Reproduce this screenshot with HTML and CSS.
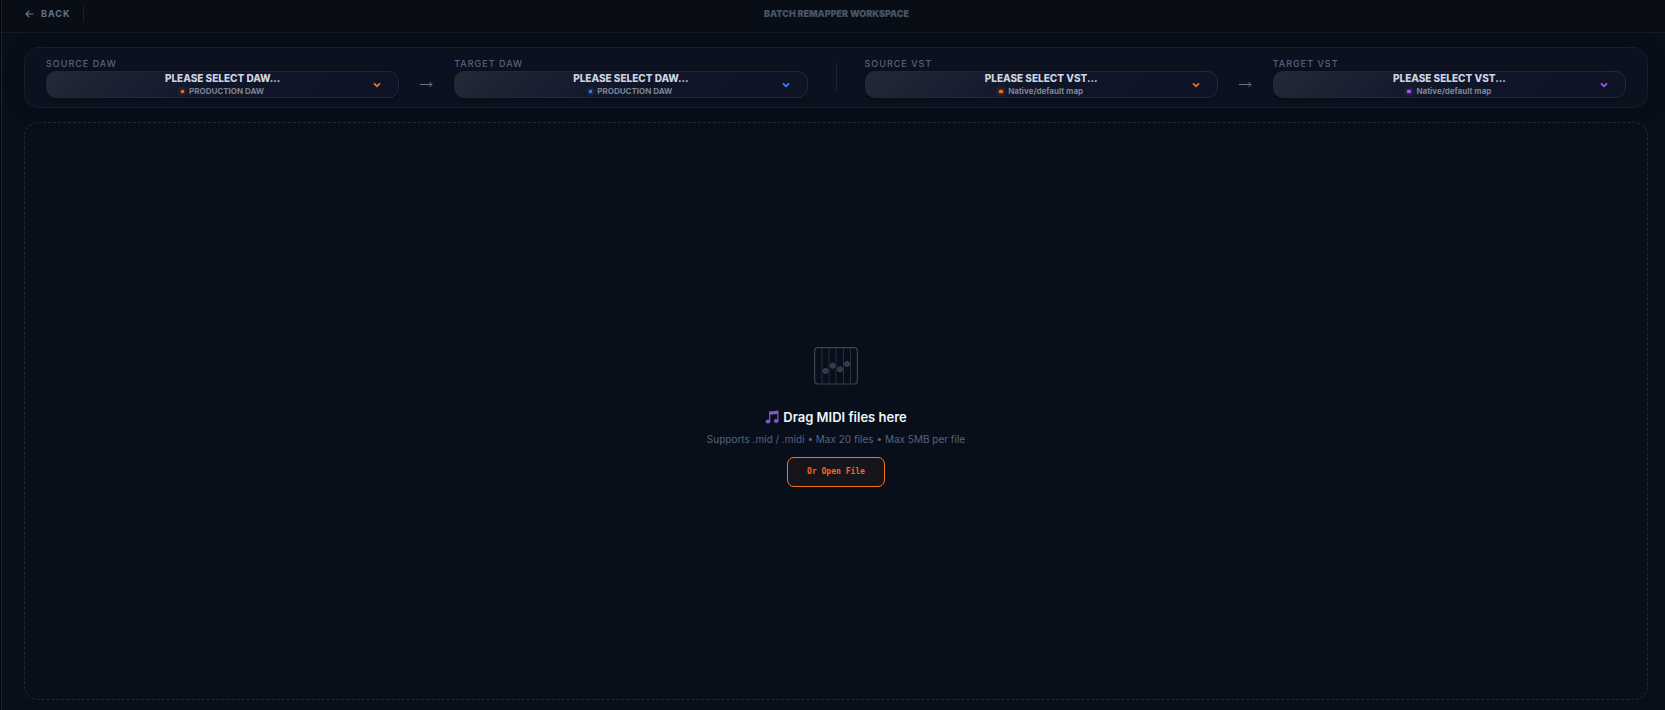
FILE: index.html
```html
<!DOCTYPE html>
<html lang="en">
<head>
    <meta charset="UTF-8">
    <meta name="viewport" content="width=device-width, initial-scale=1.0">
    <title>Batch Remapper Workspace</title>
    <link rel="stylesheet" href="styles.css">
</head>
<body>

<header class="topbar">
    <a href="#" class="back">
        <svg width="9" height="8" viewBox="0 0 9 8" fill="none" stroke="currentColor" stroke-width="1.2"><path d="M8.500 4H1M4.300 .8L1 4l3.300 3.200"/></svg>
        Back
    </a>
    <h1 class="title">Batch Remapper Workspace</h1>
</header>

<main class="workspace">

    <section class="mapping">
        <div class="field orange">
            <label for="sourceDaw">Source DAW</label>
            <div class="picker">
                <select id="sourceDaw"><option>PLEASE SELECT DAW...</option></select>
                <span class="hint"><i class="dot"></i>PRODUCTION DAW</span>
                <svg class="chevron" width="8" height="6" viewBox="0 0 8 6" fill="none" stroke="currentColor" stroke-width="1.8"><path d="M1 1.3l3 3 3-3"/></svg>
            </div>
        </div>
        <svg class="arrow" width="15" height="7" viewBox="0 0 15 7" fill="none" stroke="currentColor"><path d="M1 3.5h12M10.5 1L13 3.5 10.5 6"/></svg>
        <div class="field blue">
            <label for="targetDaw">Target DAW</label>
            <div class="picker">
                <select id="targetDaw"><option>PLEASE SELECT DAW...</option></select>
                <span class="hint"><i class="dot"></i>PRODUCTION DAW</span>
                <svg class="chevron" width="8" height="6" viewBox="0 0 8 6" fill="none" stroke="currentColor" stroke-width="1.8"><path d="M1 1.3l3 3 3-3"/></svg>
            </div>
        </div>
        <div class="divider"></div>
        <div class="field orange">
            <label for="sourceVst">Source VST</label>
            <div class="picker">
                <select id="sourceVst"><option>PLEASE SELECT VST...</option></select>
                <span class="hint"><i class="dot wide"></i>Native/default map</span>
                <svg class="chevron" width="8" height="6" viewBox="0 0 8 6" fill="none" stroke="currentColor" stroke-width="1.8"><path d="M1 1.3l3 3 3-3"/></svg>
            </div>
        </div>
        <svg class="arrow" width="15" height="7" viewBox="0 0 15 7" fill="none" stroke="currentColor"><path d="M1 3.5h12M10.5 1L13 3.5 10.5 6"/></svg>
        <div class="field purple">
            <label for="targetVst">Target VST</label>
            <div class="picker">
                <select id="targetVst"><option>PLEASE SELECT VST...</option></select>
                <span class="hint"><i class="dot wide"></i>Native/default map</span>
                <svg class="chevron" width="8" height="6" viewBox="0 0 8 6" fill="none" stroke="currentColor" stroke-width="1.8"><path d="M1 1.3l3 3 3-3"/></svg>
            </div>
        </div>
    </section>

    <section class="dropzone">
        <svg class="grid-icon" width="44" height="38" viewBox="0 0 44 38" fill="none" stroke="#3b4454">
            <rect x=".6" y=".6" width="42.8" height="36.4" rx="3.5" stroke-width="1.2"/>
            <path stroke="#272e3c" d="M8 1v36M15 1v36M22 1v36M29.5 1v36M36.500 1v36"/>
            <g fill="#303949">
                <circle cx="11.5" cy="24" r="2.5"/>
                <circle cx="18.700" cy="18.700" r="2.5"/>
                <circle cx="26" cy="22.300" r="2.5"/>
                <circle cx="33" cy="17" r="2.5"/>
            </g>
        </svg>
        <h2>
            <svg width="14" height="14" viewBox="0 0 14 14" fill="#7e57c2"><path d="M4 1.500L13.500.5v10.300h-1.300V4L5.300 4.700v7H4z"/><ellipse cx="3" cy="11.600" rx="2.400" ry="2"/><ellipse cx="11.200" cy="11" rx="2.400" ry="2"/></svg>
            Drag MIDI files here
        </h2>
        <p>Supports .mid / .midi • Max 20 files • Max 5MB per file</p>
        <button type="button">Or Open File</button>
    </section>

</main>

</body>
</html>
```

FILE: styles.css
```css
* {
    box-sizing: border-box;
}
body {
    margin: 0;
    min-height: 100vh;
    display: flex;
    flex-direction: column;
    background-color: #080f1b;
    border-left: 1px solid #02040a;
    box-shadow: inset 1px 0 #20252f;
    font-family: Inter, sans-serif;
}
.topbar {
    display: grid;
    grid-template-columns: 1fr auto 1fr;
    align-items: center;
    height: 33px;
    margin-left: 1px;
    padding: 0 17px 5px 23px;
    background-color: #090d16;
    border-bottom: 1px solid #151a24;
}
.back {
    justify-self: start;
    display: flex;
    align-items: center;
    gap: 7px;
    height: 16px;
    padding-right: 13px;
    border-right: 1px solid #191f2a;
    color: #64748b;
    font-size: 9px;
    font-weight: 700;
    letter-spacing: 1px;
    text-transform: uppercase;
    text-decoration: none;
}
.title {
    margin: 0;
    color: #475569;
    font-size: 9px;
    font-weight: 900;
    text-transform: uppercase;
}
.workspace {
    flex: 1;
    display: flex;
    flex-direction: column;
    gap: 14px;
    padding: 14px 17px 10px 23px;
}
.mapping {
    display: flex;
    align-items: center;
    gap: 20px;
    padding: 9px 21px;
    background-color: #0c1120;
    border: 1px solid #181d29;
    border-radius: 14px;
    box-shadow: 0 4px 20px rgba(0, 0, 0, 0.3);
}
.field {
    flex: 1;
}
.field label {
    display: block;
    margin-bottom: 1px;
    color: #56657c;
    font-size: 9px;
    font-weight: 500;
    line-height: 13px;
    letter-spacing: 1px;
    text-transform: uppercase;
}
.picker {
    display: grid;
    align-items: center;
    height: 27px;
    background: linear-gradient(135deg, #242938, #10152a 50%, #0e1326);
    border: 1px solid #232837;
    border-radius: 10px;
    box-shadow: 0 2px 6px rgba(0, 0, 0, 0.3);
}
.picker > * {
    grid-area: 1 / 1;
}
.picker select {
    appearance: none;
    width: 100%;
    height: 25px;
    padding: 0 0 12px;
    background: none;
    border: 0;
    color: #cbd5e1;
    font: 800 10px/13px Inter, sans-serif;
    text-align: center;
    text-align-last: center;
    cursor: pointer;
}
.hint {
    display: flex;
    align-items: center;
    justify-content: center;
    gap: 5px;
    padding-top: 12px;
    color: #7c8493;
    font-size: 8px;
    font-weight: 700;
    line-height: 10px;
    pointer-events: none;
}
.dot {
    width: 3px;
    height: 3px;
    margin-top: 2px;
    background-color: currentColor;
    border-radius: 1px;
    box-shadow: 0 0 4px currentColor;
}
.dot.wide {
    width: 4px;
}
.chevron {
    justify-self: end;
    margin-right: 17px;
    pointer-events: none;
}
.orange .dot, .orange .chevron {
    color: #f97316;
}
.blue .dot, .blue .chevron {
    color: #3b82f6;
}
.purple .dot, .purple .chevron {
    color: #a855f7;
}
.arrow {
    margin-top: 14px;
    color: #64748b;
}
.divider {
    width: 1px;
    height: 29px;
    margin: 0 8px;
    background-color: #1e2431;
}
.dropzone {
    flex: 1;
    display: flex;
    flex-direction: column;
    align-items: center;
    justify-content: center;
    padding-top: 11px;
    border: 1px dashed #1e293b;
    border-radius: 14px;
}
.dropzone h2 {
    display: flex;
    align-items: center;
    gap: 4px;
    margin: 22px 0 0;
    color: #f1f5f9;
    font-size: 13px;
    font-weight: 600;
    line-height: 20px;
}
.dropzone p {
    margin: 5px 0 11px;
    color: #53627e;
    font-size: 10px;
    line-height: 14px;
}
.dropzone button {
    height: 30px;
    padding: 0 19px;
    background-color: #17151c;
    border: 1px solid #f97316;
    border-radius: 7px;
    color: #f9651a;
    font: 700 8px "DejaVu Sans Mono", monospace;
    cursor: pointer;
}
```
